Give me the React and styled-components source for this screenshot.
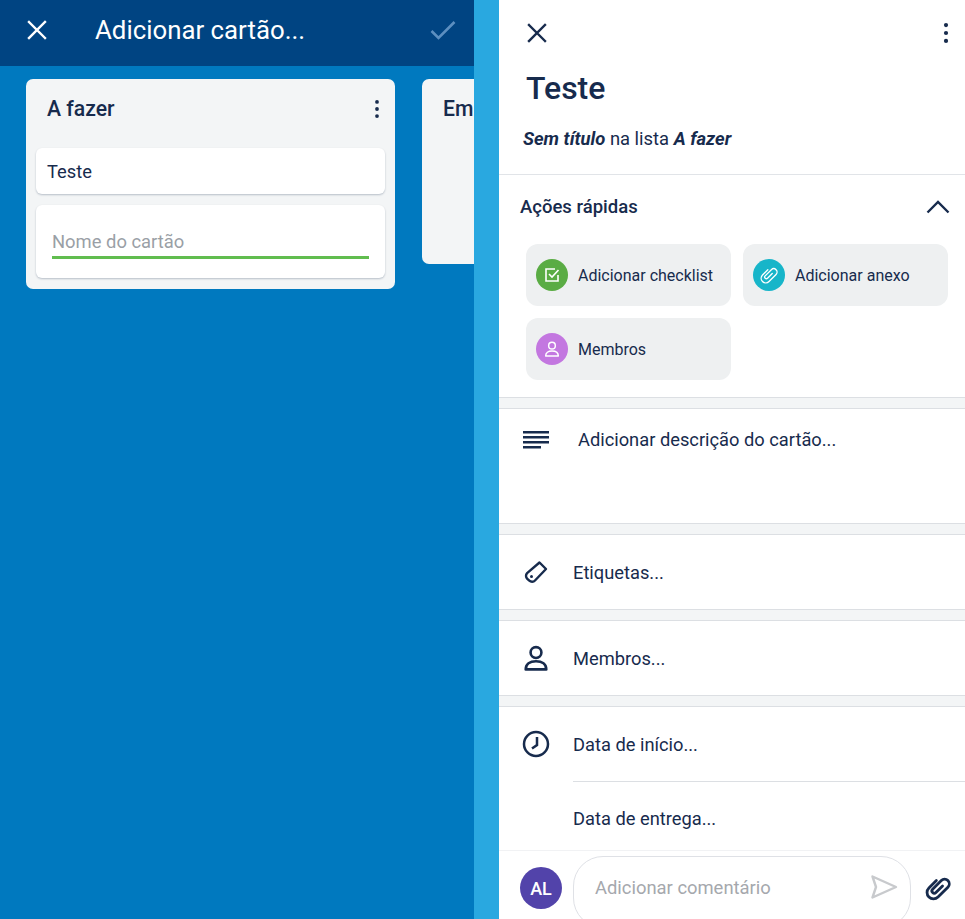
import React from "react";
import styled, { createGlobalStyle } from "styled-components";

const navy = "#172b4d";

const GlobalStyle = createGlobalStyle`
  html, body { margin: 0; padding: 0; height: 100%; }
  body { font-family: Roboto, "Liberation Sans", sans-serif; color: ${navy}; background: #29a8e0; }
`;

const Page = styled.div`
  width: 965px;
  height: 919px;
  display: flex;
  overflow: hidden;
  background: #29a8e0;
`;

const BoardPane = styled.div`
  width: 474px;
  height: 100%;
  background: #0079bf;
  overflow: hidden;
  flex-shrink: 0;
`;

const BoardHeader = styled.div`
  height: 66px;
  background: #004482;
  display: flex;
  align-items: center;
  padding: 0 18px 6px 26px;
  box-sizing: border-box;
  color: #fff;
`;

const BoardTitle = styled.div`
  font-size: 25.8px;
  margin-left: 47px;
  flex: 1;
`;

const Lists = styled.div`
  display: flex;
  gap: 27px;
  padding: 13px 0 0 26px;
  align-items: flex-start;
`;

const List = styled.div`
  flex-shrink: 0;
  width: ${(p) => p.$width}px;
  height: ${(p) => p.$height}px;
  background: #f3f5f6;
  border-radius: 7px;
  padding: 0 10px;
  box-sizing: border-box;
`;

const ListHead = styled.div`
  height: 69px;
  display: flex;
  align-items: center;
  justify-content: space-between;
  padding: 0 5px 10px 11px;
  box-sizing: border-box;
  font-size: 21.2px;
  font-weight: 500;
  white-space: nowrap;
`;

const Card = styled.div`
  background: #fff;
  border-radius: 6px;
  box-shadow: 0 1px 2px rgba(9, 30, 66, 0.25);
  margin-bottom: 11px;
  box-sizing: border-box;
`;

const TextCard = styled(Card)`
  height: 46px;
  display: flex;
  align-items: center;
  padding-left: 11px;
  font-size: 18.3px;
`;

const InputCard = styled(Card)`
  height: 73px;
  padding: 25px 16px 0;
`;

const NameInput = styled.div`
  height: 26px;
  font-size: 18.4px;
  color: #9a9fa6;
  border-bottom: 3px solid #61bd4f;
  line-height: 24px;
`;

const DetailPane = styled.div`
  width: 466px;
  margin-left: 25px;
  height: 100%;
  background: #fff;
  display: flex;
  flex-direction: column;
`;

const DetailTop = styled.div`
  height: 175px;
  flex-shrink: 0;
  padding: 20px 16px 0 27px;
  box-sizing: border-box;
  border-bottom: 1px solid #e1e4e8;
`;

const TopIcons = styled.div`
  display: flex;
  align-items: center;
  justify-content: space-between;
  height: 26px;
`;

const CardTitle = styled.div`
  font-size: 32px;
  font-weight: 500;
  line-height: 38px;
  margin-top: 23px;
`;

const Subtitle = styled.div`
  font-size: 18.4px;
  line-height: 22px;
  margin: 21px 0 0 -3px;
  b { font-style: italic; font-weight: 700; }
`;

const Quick = styled.div`
  height: 222px;
  flex-shrink: 0;
  padding: 0 15px 0 21px;
  box-sizing: border-box;
`;

const QuickHead = styled.div`
  height: 69px;
  display: flex;
  align-items: center;
  justify-content: space-between;
  padding-bottom: 5px;
  box-sizing: border-box;
  font-size: 18.5px;
  font-weight: 500;
`;

const QuickGrid = styled.div`
  display: grid;
  grid-template-columns: 205px 205px;
  gap: 12px;
  margin-left: 6px;
`;

const QuickButton = styled.div`
  height: 62px;
  background: #eef0f1;
  border-radius: 12px;
  display: flex;
  align-items: center;
  gap: 10px;
  padding-left: 10px;
  font-size: 16px;
`;

const Dot = styled.div`
  width: 32px;
  height: 32px;
  border-radius: 50%;
  background: ${(p) => p.$color};
  display: flex;
  align-items: center;
  justify-content: center;
`;

const Gap = styled.div`
  height: 10px;
  flex-shrink: 0;
  background: #f3f5f6;
  border-top: 1px solid #dcdfe3;
  border-bottom: 1px solid #dcdfe3;
`;

const Row = styled.div`
  height: ${(p) => p.$height}px;
  flex-shrink: 0;
  display: flex;
  align-items: ${(p) => (p.$top ? "flex-start" : "center")};
  box-sizing: border-box;
  padding-top: ${(p) => (p.$top ? "20px" : "0")};
  font-size: 18.3px;
`;

const RowIcon = styled.div`
  width: 74px;
  flex-shrink: 0;
  display: flex;
  justify-content: center;
`;

const RowText = styled.div`
  margin-left: ${(p) => p.$shift || 0}px;
  margin-top: ${(p) => p.$drop || 0}px;
  line-height: 22px;
`;

const RowLine = styled.div`
  height: 1px;
  flex-shrink: 0;
  margin-left: 74px;
  background: #dcdfe3;
`;

const CommentBar = styled.div`
  flex: 1;
  border-top: 1px solid #f1f2f4;
  display: flex;
  align-items: flex-start;
  padding: 5px 0 0 21px;
`;

const Avatar = styled.div`
  width: 42px;
  height: 42px;
  margin-top: 11px;
  border-radius: 50%;
  background: #5243aa;
  color: #fff;
  font-size: 18px;
  font-weight: 500;
  display: flex;
  align-items: center;
  justify-content: center;
  flex-shrink: 0;
`;

const CommentBox = styled.div`
  width: 338px;
  height: 72px;
  margin-left: 11px;
  box-sizing: border-box;
  border: 1px solid #dfe1e6;
  border-radius: 30px;
  display: flex;
  align-items: flex-start;
  justify-content: space-between;
  padding: 20px 12px 0 21px;
  font-size: 18.4px;
  color: #a5a8ad;
`;

const SendIcon = styled.svg`
  margin-top: -4px;
`;

const ClipWrap = styled.div`
  margin: 18px 0 0 13px;
  display: flex;
`;

const CloseIcon = ({ size = 22, color = navy }) => (
  <svg width={size} height={size} viewBox="0 0 22 22" fill="none" stroke={color} strokeWidth="2.4" strokeLinecap="square">
    <path d="M3 3l16 16M19 3L3 19" />
  </svg>
);

const DotsIcon = ({ height = 20, r = 2 }) => (
  <svg width="6" height={height} viewBox={`0 0 6 ${height}`} fill={navy}>
    <circle cx="3" cy={r} r={r} />
    <circle cx="3" cy={height / 2} r={r} />
    <circle cx="3" cy={height - r} r={r} />
  </svg>
);

const ClipIcon = ({ size, color, width = 2 }) => (
  <svg width={size} height={size} viewBox="0 0 24 24" fill="none" stroke={color} strokeWidth={width} strokeLinecap="round" strokeLinejoin="round">
    <path transform="rotate(45 12 12)" d="M6.5 8.5V17.5a5.5 5.5 0 0 0 11 0V5.5a4 4 0 0 0-8 0V16a2 2 0 0 0 4 0V8" />
  </svg>
);

const PersonIcon = ({ size, color, width = 2 }) => (
  <svg width={size} height={size} viewBox="0 0 24 24" fill="none" stroke={color} strokeWidth={width} strokeLinejoin="round">
    <circle cx="12" cy="7" r="5" />
    <path d="M2.5 22.5c0-4.8 3.8-7.5 9.5-7.5s9.5 2.7 9.5 7.5z" />
  </svg>
);

export default function App() {
  return (
    <Page>
      <GlobalStyle />
      <BoardPane>
        <BoardHeader>
          <CloseIcon color="#fff" />
          <BoardTitle>Adicionar cartão...</BoardTitle>
          <svg width="26" height="20" viewBox="0 0 26 20" fill="none" stroke="#5c8fc0" strokeWidth="2.6">
            <path d="M1.5 11l7 7L24.5 2" />
          </svg>
        </BoardHeader>
        <Lists>
          <List $width={369} $height={210}>
            <ListHead>
              A fazer
              <DotsIcon height={18} r={1.9} />
            </ListHead>
            <TextCard>Teste</TextCard>
            <InputCard>
              <NameInput>Nome do cartão</NameInput>
            </InputCard>
          </List>
          <List $width={200} $height={185}>
            <ListHead>Em</ListHead>
          </List>
        </Lists>
      </BoardPane>
      <DetailPane>
        <DetailTop>
          <TopIcons>
            <CloseIcon />
            <DotsIcon height={20} r={2.1} />
          </TopIcons>
          <CardTitle>Teste</CardTitle>
          <Subtitle>
            <b>Sem título</b> na lista <b>A fazer</b>
          </Subtitle>
        </DetailTop>
        <Quick>
          <QuickHead>
            Ações rápidas
            <svg width="24" height="14" viewBox="0 0 24 14" fill="none" stroke={navy} strokeWidth="2.4">
              <path d="M1.5 12.5L12 2l10.5 10.5" />
            </svg>
          </QuickHead>
          <QuickGrid>
            <QuickButton>
              <Dot $color="#5aac44">
                <svg width="18" height="18" viewBox="0 0 18 18" fill="none" stroke="#fff" strokeWidth="1.6">
                  <path d="M15 9v6H3V3h9" />
                  <path d="M6 8l3 3 6.5-7" />
                </svg>
              </Dot>
              Adicionar checklist
            </QuickButton>
            <QuickButton>
              <Dot $color="#17b5c9">
                <ClipIcon size={20} color="#fff" width={1.6} />
              </Dot>
              Adicionar anexo
            </QuickButton>
            <QuickButton>
              <Dot $color="#c377e0">
                <PersonIcon size={16} color="#fff" width={2.2} />
              </Dot>
              Membros
            </QuickButton>
          </QuickGrid>
        </Quick>
        <Gap />
        <Row $height={114} $top>
          <RowIcon>
            <svg width="26" height="20" viewBox="0 0 26 20" fill={navy}>
              <rect x="0" y="2" width="26" height="2.5" />
              <rect x="0" y="7" width="26" height="2.5" />
              <rect x="0" y="12" width="26" height="2.5" />
              <rect x="0" y="17" width="18" height="2.5" />
            </svg>
          </RowIcon>
          <RowText $shift={5}>Adicionar descrição do cartão...</RowText>
        </Row>
        <Gap />
        <Row $height={74}>
          <RowIcon>
            <svg width="24" height="24" viewBox="0 0 24 24" fill="none" stroke={navy} strokeWidth="2.4" strokeLinejoin="round">
              <path d="M15.5 2.5L22 9L11 20.5a4 4 0 0 1-5.7.2l-2-1.9a4 4 0 0 1-.2-5.7z" />
              <circle cx="7.5" cy="16.5" r="1.5" fill={navy} stroke="none" />
            </svg>
          </RowIcon>
          <RowText $drop={2}>Etiquetas...</RowText>
        </Row>
        <Gap />
        <Row $height={74}>
          <RowIcon>
            <PersonIcon size={26} color={navy} width={2.4} />
          </RowIcon>
          <RowText $drop={2}>Membros...</RowText>
        </Row>
        <Gap />
        <Row $height={74}>
          <RowIcon>
            <svg width="28" height="28" viewBox="0 0 28 28" fill="none" stroke={navy} strokeWidth="2.5">
              <circle cx="14" cy="14" r="12" />
              <path d="M15 7v8l-5 3.5" />
            </svg>
          </RowIcon>
          <RowText $drop={2}>Data de início...</RowText>
        </Row>
        <RowLine />
        <Row $height={68}>
          <RowIcon />
          <RowText $drop={6}>Data de entrega...</RowText>
        </Row>
        <CommentBar>
          <Avatar>AL</Avatar>
          <CommentBox>
            Adicionar comentário
            <SendIcon width="28" height="28" viewBox="0 0 28 28" fill="none" stroke="#c8cacd" strokeWidth="2.4" strokeLinejoin="round">
              <path d="M2.5 3.5L26 14 2.5 24.5 6 14z" />
            </SendIcon>
          </CommentBox>
          <ClipWrap>
            <ClipIcon size={28} color={navy} width={2.4} />
          </ClipWrap>
        </CommentBar>
      </DetailPane>
    </Page>
  );
}
